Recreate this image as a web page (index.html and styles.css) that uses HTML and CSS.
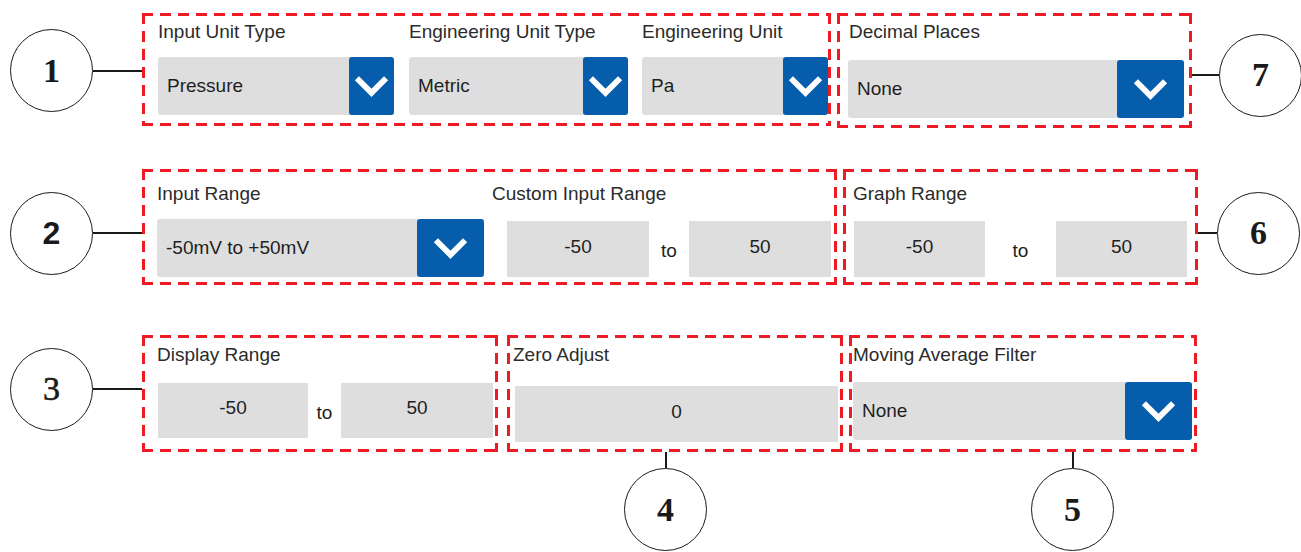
FILE: index.html
```html
<!DOCTYPE html>
<html lang="en">
<head>
  <meta charset="UTF-8" />
  <meta name="viewport" content="width=device-width, initial-scale=1.0" />
  <title>Channel Setup - Callouts</title>
  <link rel="stylesheet" href="styles.css">
</head>
<body>

  <div class="sheet">

    <!-- row 1: units + decimal places -->
    <div class="row row-1">
      <div class="callout callout-left callout-1">
        <span class="badge">1</span><span class="leader"></span>
      </div>

      <section class="group group-units">
        <div class="field w-input-unit">
          <div class="label">Input Unit Type</div>
          <div class="select">
            <span class="value">Pressure</span>
            <span class="arrow"><svg viewBox="0 0 36 22"><polyline points="3,3 18,18 33,3" /></svg></span>
          </div>
        </div>
        <div class="field w-eng-type">
          <div class="label">Engineering Unit Type</div>
          <div class="select">
            <span class="value">Metric</span>
            <span class="arrow"><svg viewBox="0 0 36 22"><polyline points="3,3 18,18 33,3" /></svg></span>
          </div>
        </div>
        <div class="field w-eng-unit">
          <div class="label">Engineering Unit</div>
          <div class="select">
            <span class="value">Pa</span>
            <span class="arrow"><svg viewBox="0 0 36 22"><polyline points="3,3 18,18 33,3" /></svg></span>
          </div>
        </div>
      </section>

      <section class="group group-decimal">
        <div class="field w-decimal">
          <div class="label">Decimal Places</div>
          <div class="select">
            <span class="value">None</span>
            <span class="arrow wide"><svg viewBox="0 0 36 22"><polyline points="3,3 18,18 33,3" /></svg></span>
          </div>
        </div>
      </section>

      <div class="callout callout-right callout-7">
        <span class="leader"></span><span class="badge">7</span>
      </div>
    </div>

    <!-- row 2: ranges -->
    <div class="row row-2">
      <div class="callout callout-left callout-2">
        <span class="badge badge-sans">2</span><span class="leader"></span>
      </div>

      <section class="group group-input-range">
        <div class="field w-input-range">
          <div class="label">Input Range</div>
          <div class="select">
            <span class="value">-50mV to +50mV</span>
            <span class="arrow wide"><svg viewBox="0 0 36 22"><polyline points="3,3 18,18 33,3" /></svg></span>
          </div>
        </div>
        <div class="field w-custom">
          <div class="label">Custom Input Range</div>
          <div class="pair pair-custom">
            <div class="box">-50</div>
            <span class="to">to</span>
            <div class="box">50</div>
          </div>
        </div>
      </section>

      <section class="group group-graph">
        <div class="field">
          <div class="label">Graph Range</div>
          <div class="pair pair-graph">
            <div class="box">-50</div>
            <span class="to">to</span>
            <div class="box">50</div>
          </div>
        </div>
      </section>

      <div class="callout callout-right callout-6">
        <span class="leader"></span><span class="badge">6</span>
      </div>
    </div>

    <!-- row 3: display, zero, filter -->
    <div class="row row-3">
      <div class="callout callout-left callout-3">
        <span class="badge badge-light">3</span><span class="leader"></span>
      </div>

      <section class="group group-display">
        <div class="field">
          <div class="label">Display Range</div>
          <div class="pair pair-display">
            <div class="box">-50</div>
            <span class="to">to</span>
            <div class="box">50</div>
          </div>
        </div>
      </section>

      <section class="group group-zero">
        <div class="field">
          <div class="label">Zero Adjust</div>
          <div class="box box-zero">0</div>
        </div>
        <div class="callout-down down-4">
          <span class="leader-v"></span><span class="badge">4</span>
        </div>
      </section>

      <section class="group group-filter">
        <div class="field w-filter">
          <div class="label">Moving Average Filter</div>
          <div class="select">
            <span class="value">None</span>
            <span class="arrow wide"><svg viewBox="0 0 36 22"><polyline points="3,3 18,18 33,3" /></svg></span>
          </div>
        </div>
        <div class="callout-down down-5">
          <span class="leader-v"></span><span class="badge">5</span>
        </div>
      </section>
    </div>

  </div>

</body>
</html>
```

FILE: styles.css
```css
body {
  margin: 0;
  background: #fff;
  font-family: "Liberation Sans", Arial, sans-serif;
  color: #262626;
  overflow: hidden;
}
.sheet {
  width: 1301px;
  height: 552px;
}
.row {
  display: flex;
  align-items: flex-start;
  padding-left: 10px;
}
.row-1 { margin-top: 13px; }
.row-2 { margin-top: 41px; }
.row-3 { margin-top: 50px; }

/* callouts */
.callout {
  display: flex;
  align-items: center;
  align-self: center;
}
.badge {
  width: 83px;
  height: 83px;
  box-sizing: border-box;
  border: 1.5px solid #1a1a1a;
  border-radius: 50%;
  display: flex;
  align-items: center;
  justify-content: center;
  font-family: "Liberation Serif", "Times New Roman", serif;
  font-weight: bold;
  font-size: 34px;
  color: #1a1a1a;
  background: #fff;
  flex-shrink: 0;
}
.badge-sans {
  font-family: "Liberation Sans", Arial, sans-serif;
  font-size: 32px;
}
.badge-light {
  font-weight: normal;
  -webkit-text-stroke: 0.6px #1a1a1a;
}
.leader {
  height: 2px;
  background: #1a1a1a;
  width: 49px;
}
.callout-right .leader { width: 27px; }
.callout-6 .leader { width: 19px; }
.callout-7 { margin-top: 9px; }
.callout-2, .callout-6 { margin-top: 12px; }
.callout-3 { margin-bottom: 9px; }

.callout-down {
  position: absolute;
  top: 100%;
  margin-top: 3px;
  display: flex;
  flex-direction: column;
  align-items: center;
}
.leader-v {
  width: 2px;
  height: 16px;
  background: #1a1a1a;
}
.down-4 { left: 114px; }
.down-5 { left: 179px; }

/* dashed groups: long dashes drawn with gradients */
.group {
  position: relative;
  box-sizing: border-box;
  border: 3px solid transparent;
  background-origin: border-box;
  background-clip: border-box;
  background-repeat: no-repeat;
  background-image:
    repeating-linear-gradient(90deg, #ed1c24 0 11px, transparent 11px 18px),
    repeating-linear-gradient(90deg, #ed1c24 0 11px, transparent 11px 18px),
    repeating-linear-gradient(180deg, #ed1c24 0 11px, transparent 11px 18px),
    repeating-linear-gradient(180deg, #ed1c24 0 11px, transparent 11px 18px);
  background-size: 100% 3px, 100% 3px, 3px 100%, 3px 100%;
  background-position: left top, left bottom, left top, right top;
  display: flex;
  flex-shrink: 0;
}
.group + .group { margin-left: 6px; }

.group-units {
  width: 689px;
  height: 113px;
  padding: 5px 0 0 13px;
  gap: 15px;
}
.group-units .w-eng-unit { margin-left: -1px; }
.group-decimal {
  width: 355px;
  height: 115px;
  padding: 5px 0 0 8px;
}
.group-decimal .label { margin-bottom: 17px; margin-left: 1px; }

.group-input-range {
  width: 695px;
  height: 116px;
  padding: 11px 0 0 12px;
  gap: 8px;
}
.group-graph {
  width: 355px;
  height: 116px;
  padding: 11px 0 0 8px;
}
.group-graph .label { margin-left: -1px; }

.group-display {
  width: 356px;
  height: 117px;
  padding: 6px 0 0 13px;
}
.group-display .label { margin-bottom: 17px; margin-left: -1px; }
.group.group-zero {
  width: 336px;
  height: 117px;
  padding: 6px 0 0 3px;
  margin-left: 9px;
}
.group-zero .label { margin-bottom: 20px; }
.group-filter {
  width: 348px;
  height: 117px;
  padding: 6px 0 0 1px;
}
.group-filter .label { margin-bottom: 16px; }

/* fields */
.field {
  display: flex;
  flex-direction: column;
}
.label {
  font-size: 19px;
  line-height: 22px;
  color: #2b2b2b;
  white-space: nowrap;
  margin-bottom: 14px;
}
.w-input-unit { width: 236px; }
.w-eng-type { width: 219px; }
.w-eng-unit { width: 186px; }
.w-decimal { width: 336px; }
.w-input-range { width: 327px; }
.w-filter { width: 339px; }

.select {
  height: 58px;
  display: flex;
  align-items: stretch;
  background: #dedede;
  border-radius: 3px;
}
.value {
  flex: 1;
  display: flex;
  align-items: center;
  padding-left: 9px;
  font-size: 19px;
  color: #1e1e1e;
  white-space: nowrap;
}
.arrow {
  width: 45px;
  background: #065dac;
  border-radius: 3px;
  display: flex;
  align-items: center;
  justify-content: center;
}
.arrow.wide { width: 67px; }
.arrow svg {
  width: 35px;
  height: 22px;
}
.arrow polyline {
  fill: none;
  stroke: #fff;
  stroke-width: 6;
}

/* plain value boxes */
.pair {
  display: flex;
  align-items: center;
}
.box {
  height: 56px;
  background: #dedede;
  display: flex;
  align-items: center;
  justify-content: center;
  padding-bottom: 5px;
  box-sizing: border-box;
  font-size: 19px;
  color: #1e1e1e;
}
.to {
  font-size: 19px;
  color: #1e1e1e;
  text-align: center;
  padding-top: 4px;
}
.pair-custom { margin: 2px 0 0 15px; }
.pair-custom .box { width: 142px; }
.pair-custom .to { width: 40px; }
.pair-graph { margin-top: 2px; }
.pair-graph .box { width: 131px; }
.pair-graph .to { width: 71px; }
.pair-display .box { height: 55px; }
.pair-display .box:first-child { width: 150px; }
.pair-display .box:last-child { width: 152px; }
.pair-display .to { width: 33px; }
.box-zero {
  width: 323px;
  margin-left: 2px;
}
```
